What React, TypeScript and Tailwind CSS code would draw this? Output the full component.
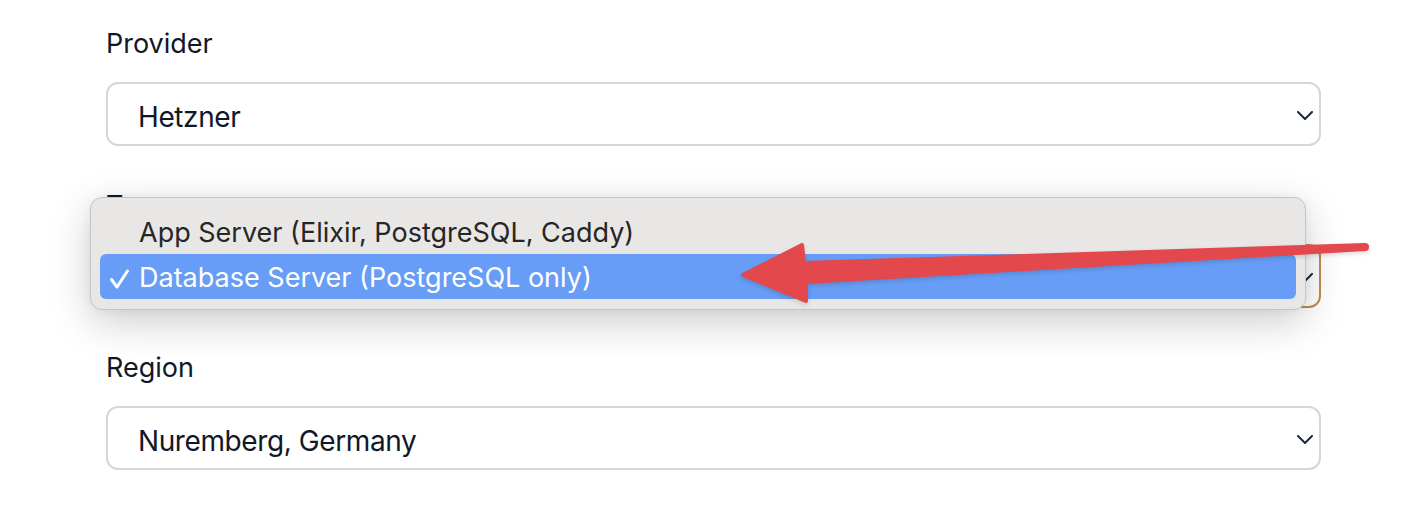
const font = { fontFamily: 'Inter, "Noto Sans", sans-serif' };

const Chevron = () => (
  <svg width="16" height="9" viewBox="0 0 16 9" className="shrink-0 mt-[2px]">
    <path d="M1 1l7 7 7-7" fill="none" stroke="#1f2937" strokeWidth="2" strokeLinecap="round" strokeLinejoin="round" />
  </svg>
);

const Check = () => (
  <svg width="22" height="22" viewBox="0 0 22 22" className="absolute left-[9px] top-[14px]">
    <path d="M2.5 11.5l5.5 7.5L18.5 3" fill="none" stroke="white" strokeWidth="3" strokeLinecap="round" strokeLinejoin="round" />
  </svg>
);

const Field = ({ label, value, focused, children }: { label: string; value?: string; focused?: boolean; children?: React.ReactNode }) => (
  <div className="relative">
    <div className="text-[27px] leading-[36px] text-[#111827]">{label}</div>
    <div
      className={`mt-[20px] h-[64px] rounded-[12px] border-2 bg-white flex items-center justify-between pl-[30px] pr-[6px] ${
        focused ? 'border-[#c08a4e]' : 'border-[#d4d6db]'
      }`}
    >
      <span className="mt-[6px] text-[28px] tracking-[-0.4px] text-[#111827]">{value}</span>
      <Chevron />
    </div>
    {children}
  </div>
);

const options = [
  { label: 'App Server (Elixir, PostgreSQL, Caddy)', selected: false },
  { label: 'Database Server (PostgreSQL only)', selected: true },
];

export default function App() {
  return (
    <div className="relative w-[1428px] h-[512px] bg-white overflow-hidden" style={font}>
      <div className="pl-[106px] pt-[26px] w-[1321px] flex flex-col gap-[42px]">
        <Field label="Provider" value="Hetzner" />
        <Field label="Type" focused>
          {/* Native select menu, open */}
          <div className="absolute left-[-16px] top-[9px] w-[1216px] rounded-[12px] border border-[#c6c5c3] bg-[#e8e7e5] px-[9px] pt-[11px] pb-[10px] shadow-[0_12px_40px_rgba(0,0,0,0.2),0_0_10px_rgba(0,0,0,0.06)]">
            {options.map((o) => (
              <div
                key={o.label}
                className={`relative h-[45px] flex items-center pl-[39px] pt-[4px] rounded-[6px] text-[27px] ${
                  o.selected ? 'bg-[#679df6] text-white' : 'text-[#262626]'
                }`}
              >
                {o.selected && <Check />}
                {o.label}
              </div>
            ))}
          </div>
        </Field>
        <Field label="Region" value="Nuremberg, Germany" />
      </div>

      {/* Annotation arrow */}
      <svg className="absolute left-0 top-0 pointer-events-none" width="1428" height="512" viewBox="0 0 1428 512" style={{ filter: 'drop-shadow(0 2px 2px rgba(0,0,0,0.15))' }}>
        <polygon
          points="743,275 802,245 804,263 1365,245 1365,249 806,282 806,301"
          fill="#e3484d"
          stroke="#e3484d"
          strokeWidth="4"
          strokeLinejoin="round"
        />
        <circle cx="1365" cy="247" r="4" fill="#e3484d" />
      </svg>
    </div>
  );
}
